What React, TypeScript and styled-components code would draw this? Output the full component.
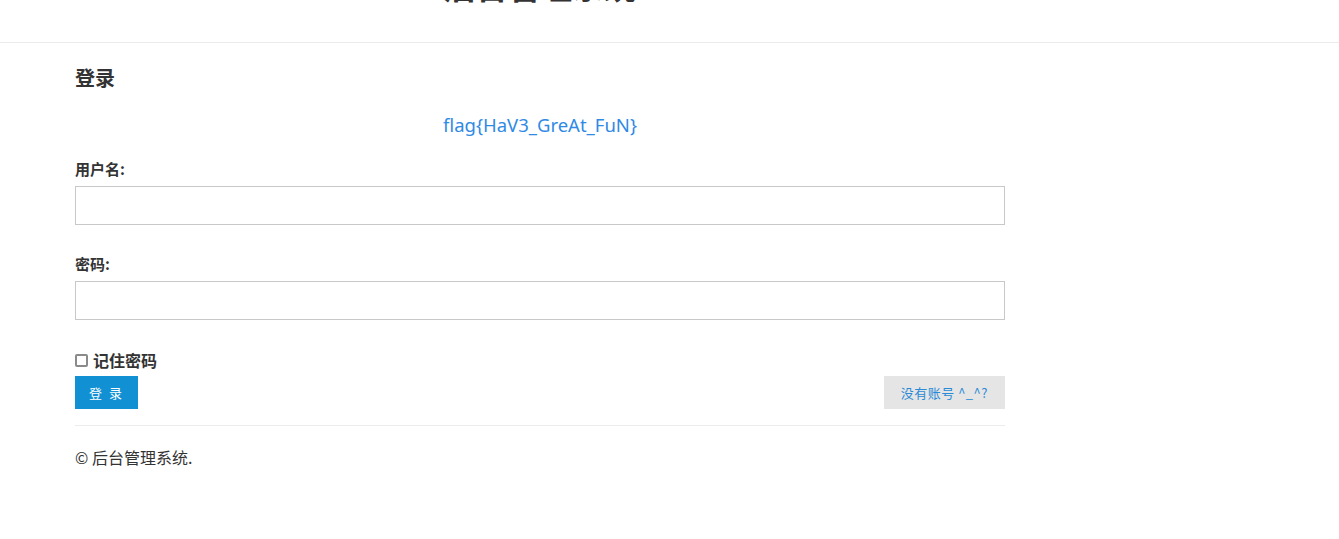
import React from "react";
import styled, { createGlobalStyle } from "styled-components";

const GlobalStyle = createGlobalStyle`
  html, body {
    margin: 0;
    padding: 0;
    background: #fff;
    font-family: "Noto Sans CJK SC", "Noto Sans", sans-serif;
    color: #333;
  }
`;

const Header = styled.header`
  height: 42px;
  border-bottom: 1px solid #ebebeb;
  overflow: hidden;
`;

const HeaderTitle = styled.h1`
  width: 930px;
  margin: -33px 0 0 75px;
  text-align: center;
  font-size: 32px;
  line-height: 36px;
  font-weight: 700;
  color: #333;
`;

const Container = styled.main`
  width: 930px;
  margin-left: 75px;
  display: flex;
  flex-direction: column;
`;

const Heading = styled.h2`
  margin: 21px 0 0;
  font-size: 20px;
  line-height: 28px;
  font-weight: 700;
  color: #333;
`;

const Flag = styled.div`
  margin-top: 21px;
  text-align: center;
  font-size: 18.5px;
  line-height: 24px;
  color: #2f8ae5;
  font-family: "Noto Sans", "Open Sans", sans-serif;
`;

const Field = styled.div<{ $top: number }>`
  display: flex;
  flex-direction: column;
  gap: 7px;
  margin-top: ${({ $top }) => $top}px;
`;

const Label = styled.label`
  font-size: 15px;
  line-height: 20px;
  font-weight: 700;
  color: #333;
`;

const Input = styled.input`
  box-sizing: border-box;
  width: 100%;
  height: 39px;
  border: 1px solid #c8c8c8;
  padding: 0 10px;
  font-size: 14px;
  outline: none;
`;

const Remember = styled.label`
  margin-top: 29px;
  display: flex;
  align-items: center;
  gap: 5px;
  font-size: 16px;
  line-height: 22px;
  font-weight: 700;
  color: #333;
`;

const CheckBox = styled.span`
  box-sizing: border-box;
  width: 13px;
  height: 13px;
  border: 2px solid #8a8a8a;
  border-radius: 2px;
  background: #fff;
`;

const Actions = styled.div`
  margin-top: 5px;
  display: flex;
  justify-content: space-between;
`;

const Button = styled.button<{ $primary?: boolean }>`
  height: 33px;
  border: none;
  padding: 0 ${({ $primary }) => ($primary ? "14px" : "17px")};
  font-size: 13px;
  font-family: "Noto Sans CJK SC", sans-serif;
  letter-spacing: ${({ $primary }) => ($primary ? "2px" : "0.5px")};
  background: ${({ $primary }) => ($primary ? "#1191d3" : "#e5e5e5")};
  color: ${({ $primary }) => ($primary ? "#fff" : "#2a8ad6")};
  cursor: pointer;
`;

const Divider = styled.hr`
  margin: 16px 0 0;
  border: none;
  border-top: 1px solid #ececec;
`;

const Footer = styled.footer`
  margin-top: 20px;
  font-size: 16px;
  line-height: 22px;
  color: #333;
`;

export default function App() {
  return (
    <>
      <GlobalStyle />
      <Header>
        <HeaderTitle>后台管理系统</HeaderTitle>
      </Header>
      <Container>
        <Heading>登录</Heading>
        <Flag>flag{"{"}HaV3_GreAt_FuN{"}"}</Flag>
        <Field $top={22}>
          <Label>用户名:</Label>
          <Input type="text" />
        </Field>
        <Field $top={29}>
          <Label>密码:</Label>
          <Input type="password" />
        </Field>
        <Remember>
          <CheckBox />
          记住密码
        </Remember>
        <Actions>
          <Button $primary>登 录</Button>
          <Button>没有账号 ^_^?</Button>
        </Actions>
        <Divider />
        <Footer>© 后台管理系统.</Footer>
      </Container>
    </>
  );
}
